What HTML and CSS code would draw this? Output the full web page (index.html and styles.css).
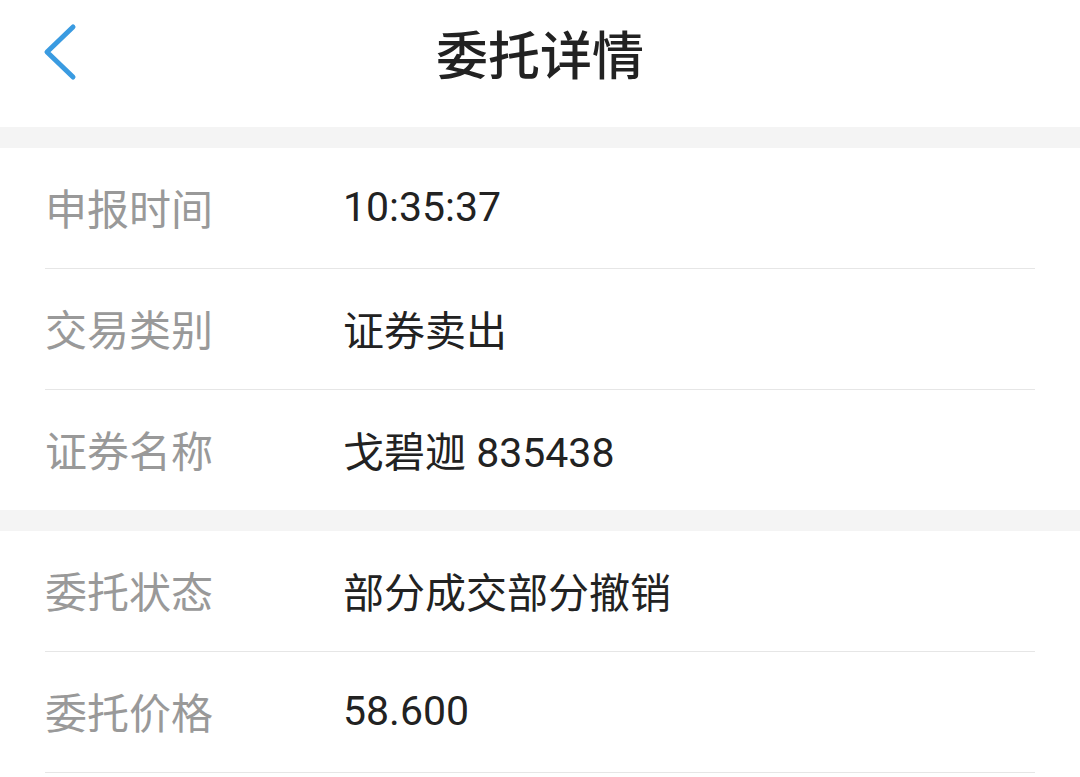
FILE: index.html
```html
<!DOCTYPE html>
<html lang="zh-CN">
<head>
    <meta charset="UTF-8">
    <meta name="viewport" content="width=device-width, initial-scale=1.0">
    <title>委托详情</title>
    <link rel="stylesheet" href="styles.css">
</head>
<body>

  <header class="nav">
    <div class="nav-left">
      <a class="back" href="#">
        <svg width="40" height="60" viewBox="0 0 40 60">
          <path d="M33 5 L7 30 L33 55" fill="none" stroke="#3a9be1" stroke-width="5" stroke-linecap="round" stroke-linejoin="round"/>
        </svg>
      </a>
    </div>
    <h1 class="title">委托详情</h1>
    <div></div>
  </header>

  <div class="gap"></div>

  <section class="group">
    <div class="row"><span class="label">申报时间</span><span class="value">10:35:37</span></div>
    <div class="row"><span class="label">交易类别</span><span class="value">证券卖出</span></div>
    <div class="row"><span class="label">证券名称</span><span class="value">戈碧迦 835438</span></div>
  </section>

  <div class="gap"></div>

  <section class="group open">
    <div class="row"><span class="label">委托状态</span><span class="value">部分成交部分撤销</span></div>
    <div class="row"><span class="label">委托价格</span><span class="value">58.600</span></div>
  </section>

</body>
</html>
```

FILE: styles.css
```css
* {
  box-sizing: border-box;
}

body {
  margin: 0;
  background: #fff;
  font-family: Roboto, "Noto Sans CJK SC", sans-serif;
  color: #222;
}

.nav {
  height: 104px;
  margin-bottom: 23px;
  display: grid;
  grid-template-columns: 1fr auto 1fr;
  align-items: center;
}

.nav-left {
  padding-left: 40px;
}

.back {
  display: block;
  width: 40px;
  height: 60px;
}

.back svg {
  display: block;
}

.title {
  margin: 0;
  font-size: 52px;
  font-weight: 500;
  color: #222;
  font-family: "Noto Sans CJK SC", sans-serif;
}

.gap {
  height: 21px;
  background: #f4f4f4;
}

.row {
  display: flex;
  align-items: center;
  height: 121px;
  margin: 0 45px;
  padding-bottom: 3px;
  border-bottom: 1px solid #e6e6e6;
  font-size: 42px;
}

.group .row:last-child {
  border-bottom: none;
  height: 120px;
}

.group.open .row:last-child {
  border-bottom: 1px solid #e6e6e6;
  height: 121px;
}

.label {
  width: 298px;
  color: #999;
  font-family: "Noto Sans CJK SC", sans-serif;
}

.value {
  color: #222;
  font-size: 41px;
}
```
